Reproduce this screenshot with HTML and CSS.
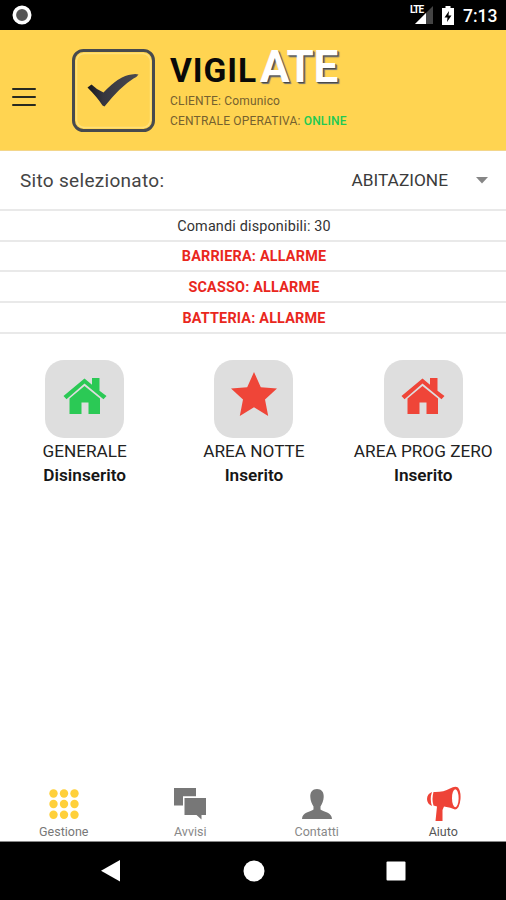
FILE: index.html
```html
<!DOCTYPE html>
<html lang="it">
<head>
<meta charset="utf-8">
<title>Vigilate</title>
<link rel="stylesheet" href="styles.css">
</head>
<body>
<div class="phone">
  <div class="statusbar">
    <svg class="record" width="20" height="20" viewBox="0 0 20 20"><circle cx="10" cy="10" r="7.7" fill="#555" stroke="#fff" stroke-width="3.6"/></svg>
    <div class="signal"><span class="lte">LTE</span>
      <svg width="18" height="18" viewBox="0 0 18 18"><path d="M18 0V18H0z" fill="#444"/><path d="M11 7V18H0z" fill="#fff"/></svg>
    </div>
    <svg class="battery" width="12" height="19" viewBox="0 0 12 19"><path d="M3.5 0h5v2H12v17H0V2h3.5z" fill="#fff"/><path d="M7 5L2.5 11.5h3L5 16l4.5-6.5h-3z" fill="#000"/></svg>
    <span class="clock">7:13</span>
  </div>
  <header class="header">
    <div class="menu"><i></i><i></i><i></i></div>
    <svg class="logo" width="84" height="84" viewBox="0 0 84 84">
      <defs><linearGradient id="tick" x1="0" y1="0" x2="1" y2="0"><stop offset="0" stop-color="#17171c"/><stop offset=".3" stop-color="#35353f"/><stop offset="1" stop-color="#4b4b50"/></linearGradient></defs>
      <rect x="2.500" y="1.500" width="80" height="80" rx="10" fill="#ffd451" stroke="#474a4e" stroke-width="3"/>
      <rect x="5.500" y="4.500" width="74" height="74" rx="8" fill="none" stroke="#ffe079" stroke-width="1.5"/>
      <path d="M16.500 38.500L20.500 35.500Q25.500 40.500 32.500 43.500Q48.500 26.500 60.500 25.500Q64.500 24.500 67.500 25.500Q66.500 27.500 62.500 29.500Q49.500 37.500 33.500 57.500L31.500 56.500Q26.500 48.500 16.500 38.500z" fill="url(#tick)"/>
    </svg>
    <div class="brand">
      <div class="wordmark"><span class="vigil">VIGIL</span><span class="ate">ATE</span></div>
      <div class="meta client">CLIENTE: Comunico</div>
      <div class="meta central">CENTRALE OPERATIVA: <span class="online">ONLINE</span></div>
    </div>
  </header>
  <div class="site">
    <span class="site-label">Sito selezionato:</span>
    <span class="site-value">ABITAZIONE</span>
    <svg width="12" height="7" viewBox="0 0 12 7"><path d="M0 0H12L6 6.5z" fill="#868686"/></svg>
  </div>
  <div class="row commands">Comandi disponibili: 30</div>
  <div class="row alarm">BARRIERA: ALLARME</div>
  <div class="row alarm">SCASSO: ALLARME</div>
  <div class="row alarm">BATTERIA: ALLARME</div>
  <main class="areas">
    <div class="area">
      <div class="tile green"><svg width="46" height="44" viewBox="0 0 46 44"><path d="M1.5 20L22.5 2.5L30 8.7V2H37.5V14.8L44.5 20L41.5 23.2L22.5 7.5L4.5 23.2z"/><path d="M7.5 22.5L22.5 10L38 22.5V38H26.5V26.5H19.5V38H7.5z"/></svg></div>
      <div class="name">GENERALE</div><div class="state">Disinserito</div>
    </div>
    <div class="area">
      <div class="tile red"><svg class="star" width="46" height="44" viewBox="0 0 46 44"><path d="M23 0L29.8 15.2L46 16.5L34 27.5L37.2 44L23 35.3L8.8 44L12 27.5L0 16.5L16.2 15.2z"/></svg></div>
      <div class="name">AREA NOTTE</div><div class="state">Inserito</div>
    </div>
    <div class="area">
      <div class="tile red"><svg width="46" height="44" viewBox="0 0 46 44"><path d="M1.5 20L22.5 2.5L30 8.7V2H37.5V14.8L44.5 20L41.5 23.2L22.5 7.5L4.5 23.2z"/><path d="M7.5 22.5L22.5 10L38 22.5V38H26.5V26.5H19.5V38H7.5z"/></svg></div>
      <div class="name">AREA PROG ZERO</div><div class="state">Inserito</div>
    </div>
  </main>
  <nav class="tabs">
    <div class="tab gestione">
      <svg width="36" height="36" viewBox="0 0 36 36" fill="#ffd03a"><circle cx="7.5" cy="7.5" r="4.2"/><circle cx="18" cy="7.5" r="4.2"/><circle cx="28.5" cy="7.5" r="4.2"/><circle cx="7.5" cy="18" r="4.2"/><circle cx="18" cy="18" r="4.2"/><circle cx="28.5" cy="18" r="4.2"/><circle cx="7.5" cy="28.7" r="4.2"/><circle cx="18" cy="28.7" r="4.2"/><circle cx="28.5" cy="28.7" r="4.2"/></svg>
      <span>Gestione</span>
    </div>
    <div class="tab avvisi">
      <svg width="36" height="36" viewBox="0 0 36 36" fill="#777"><path d="M2 2H24V10.3H11V19.5H2z"/><path d="M12.5 12H34V29H29.5V33.5L24.5 29H12.5z"/></svg>
      <span>Avvisi</span>
    </div>
    <div class="tab contatti">
      <svg width="36" height="36" viewBox="0 0 36 36" fill="#777"><path d="M18 3C22.5 3 25 6 24.7 11C24.6 15 23 18 21.5 20.5V23.5C24 26 33 26 33 33H3C3 26 12 26 14.5 23.5V20.5C13 18 11.4 15 11.3 11C11 6 13.5 3 18 3z"/></svg>
      <span>Contatti</span>
    </div>
    <div class="tab aiuto">
      <svg width="36" height="36" viewBox="0 0 36 36" fill="#ee4337"><path d="M8.500 6Q18 6.500 25 2.500Q30-.5 33 1.500Q36 5 35.500 13Q34.500 23 30 23.500Q26 21.500 19 20.500L17.500 24V35H10.500L12 20.500L8.500 19.500Q6.500 13 8.500 6z"/><ellipse cx="30.300" cy="12.200" rx="3.300" ry="9" fill="#fff"/><path d="M7 6Q2 8 2 13Q2 18 7 20Q4.500 13 7 6z"/></svg>
      <span>Aiuto</span>
    </div>
  </nav>
  <div class="navbar">
    <svg width="20" height="22" viewBox="0 0 20 22" fill="#fff"><path d="M19 0V21.5L0 10.8z"/></svg>
    <svg width="22" height="22" viewBox="0 0 22 22" fill="#fff"><circle cx="11" cy="11" r="10.5"/></svg>
    <svg width="20" height="20" viewBox="0 0 20 20" fill="#fff"><rect x=".5" y=".5" width="19" height="19" rx="1"/></svg>
  </div>
</div>
</body>
</html>
```
FILE: styles.css
```css
* { box-sizing: border-box; }
body { margin: 0; font-family: Roboto, "Liberation Sans", sans-serif; background: #fff; }
svg { display: block; flex: none; }
.phone { width: 506px; height: 900px; display: flex; flex-direction: column; overflow: hidden; }
.phone > * { flex: none; }
.statusbar { height: 30px; background: #000; display: flex; align-items: center; padding: 0 9px 0 12px; color: #fff; }
.record { margin-right: auto; }
.signal { position: relative; padding-left: 5px; margin-right: 9px; }
.lte { position: absolute; left: 0; top: 0; font-size: 10px; line-height: 8px; font-weight: 700; letter-spacing: -1px; background: #000; padding-right: 1px; }
.clock { width: 34px; margin-left: 9px; font-size: 17.5px; font-weight: 500; line-height: 30px; white-space: nowrap; padding-top: 2px; }
.header { height: 121px; background: #ffd451; display: flex; align-items: flex-start; padding: 19px 0 0 12px; border-bottom: 1px solid #f3d68b; }
.menu { width: 24px; height: 18px; margin: 39px 36px 0 0; display: flex; flex-direction: column; justify-content: space-between; }
.menu i { height: 2px; background: #282a20; border-radius: 1px; }
.logo { margin-left: -1px; margin-right: 1px; }
.brand { margin-left: 14px; }
.wordmark { height: 42px; display: flex; align-items: baseline; line-height: 37px; font-weight: 700; white-space: nowrap; }
.vigil { font-size: 33.5px; width: 90px; letter-spacing: .9px; color: #090909; }
.ate { font-size: 44px; letter-spacing: -.4px; color: #fff; text-shadow: 1px 1px 1px #444, 2px 2px 1px #777; }
.meta { font-size: 12px; line-height: 20px; letter-spacing: .18px; color: #75612f; white-space: nowrap; }
.online { color: #20ca53; font-weight: 500; }
.site { height: 60px; display: flex; align-items: center; padding: 0 18px 0 20px; border-bottom: 2px solid #e9e9e9; color: #444; }
.site-label { font-size: 19px; letter-spacing: .3px; margin-right: auto; }
.site-value { font-size: 17.3px; margin-right: 28px; color: #3b3b3b; }
.row { height: 30.8px; border-bottom: 2px solid #e9e9e9; display: flex; align-items: center; justify-content: center; font-size: 14.4px; letter-spacing: .17px; color: #333; padding-left: 2px; padding-top: 2px; }
.commands { height: 30.6px; }
.alarm { color: #e9271d; font-weight: 700; font-size: 14.4px; letter-spacing: .2px; }
.areas { height: 448px; padding-top: 26px; display: grid; grid-template-columns: repeat(3, 169.3px); align-content: start; }
.area { display: flex; flex-direction: column; align-items: center; }
.tile { width: 79px; height: 78px; border-radius: 19px; background: #dedede; display: flex; justify-content: center; padding-top: 16px; }
.green { fill: #2bc955; }
.red { fill: #ef4538; }
.star { margin-top: -4px; }
.name { margin-top: 1px; font-size: 17.2px; line-height: 25px; color: #222; white-space: nowrap; }
.state { font-size: 17.2px; line-height: 23px; font-weight: 600; color: #161616; }
.tabs { height: 60px; display: flex; border-bottom: 1px solid #888; }
.tab { width: 126.5px; padding: 4px 0 0 1px; display: flex; flex-direction: column; align-items: center; font-size: 12.5px; color: #888; }
.tab span { line-height: 17px; margin-top: 1px; }
.gestione { color: #777; }
.aiuto { color: #555; }
.navbar { flex: 1; background: #000; display: flex; align-items: center; justify-content: space-between; padding: 0 100px 0 101px; }
```
